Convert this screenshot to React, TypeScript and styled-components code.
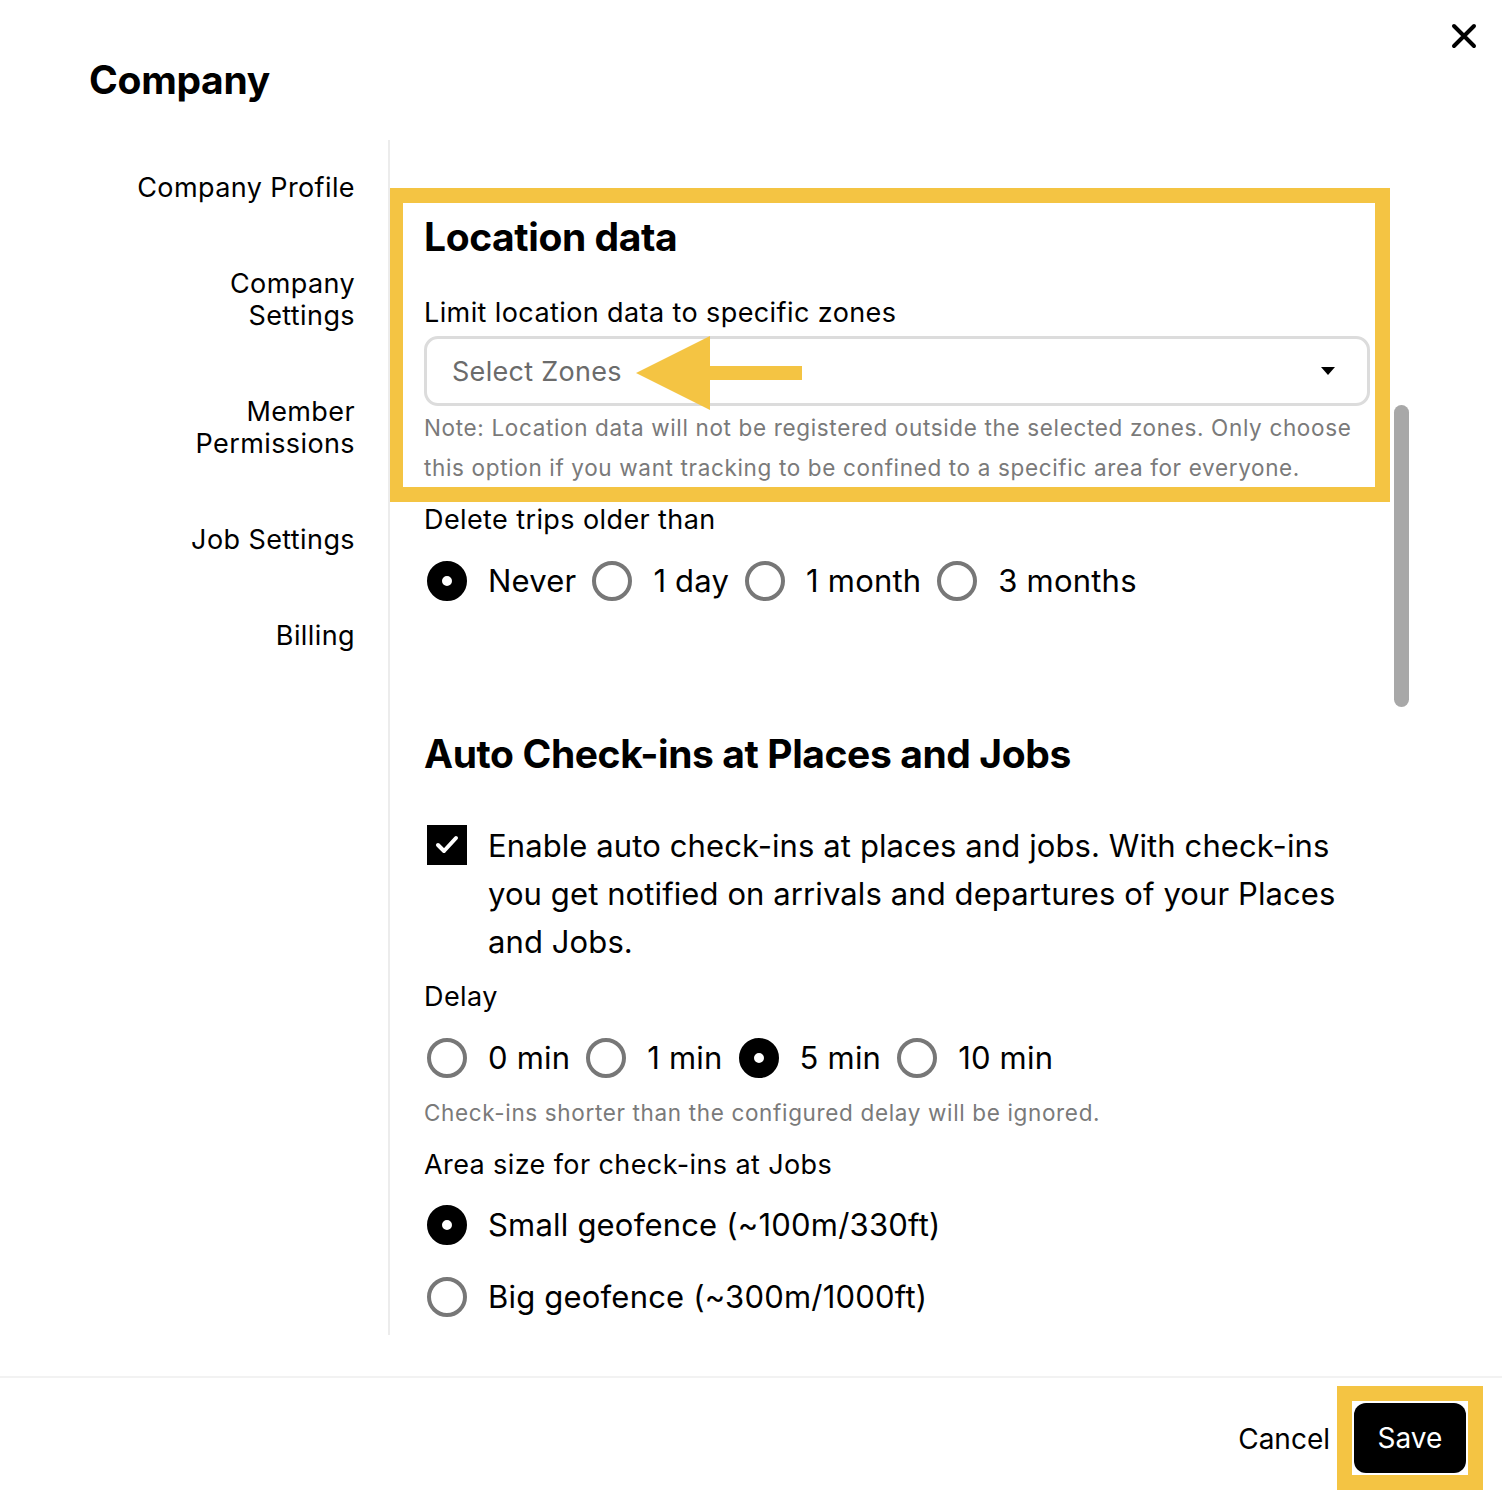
import styled, { createGlobalStyle } from 'styled-components';

const GlobalStyle = createGlobalStyle`
  html, body {
    margin: 0;
    padding: 0;
    background: #ffffff;
  }
  body {
    font-family: Inter, 'Noto Sans', 'Liberation Sans', sans-serif;
    color: #000000;
  }
`;

const YELLOW = '#f4c443';

const Page = styled.div`
  width: 1502px;
  height: 1490px;
  position: relative;
  overflow: hidden;
  display: flex;
  flex-direction: column;
`;

const Header = styled.div`
  height: 140px;
  padding-left: 89px;
  display: flex;
  align-items: flex-start;
`;

const Title = styled.h1`
  margin: 56px 0 0;
  font-size: 39px;
  font-weight: 700;
  letter-spacing: -0.3px;
  line-height: 48px;
`;

const CloseButton = styled.button`
  position: absolute;
  top: 22px;
  right: 24px;
  width: 28px;
  height: 28px;
  border: none;
  background: none;
  padding: 0;
  cursor: pointer;
`;

const Body = styled.div`
  display: flex;
  height: 1195px;
  position: relative;
`;

const Sidebar = styled.nav`
  width: 355px;
  padding-top: 32px;
  padding-right: 33px;
  display: flex;
  flex-direction: column;
  align-items: flex-end;
  gap: 64px;
  border-right: 2px solid #ececec;
`;

const NavItem = styled.a`
  font-size: 27px;
  line-height: 32px;
  text-align: right;
  color: #000;
  text-decoration: none;
  letter-spacing: 0.4px;
`;

const Content = styled.div`
  flex: 1;
  padding-left: 34px;
  padding-right: 132px;
  overflow: hidden;
`;

const ScrollThumb = styled.div`
  position: absolute;
  right: 93px;
  top: 265px;
  width: 15px;
  height: 302px;
  border-radius: 8px;
  background: #a8a8a8;
`;

const Section = styled.section`
  position: relative;
  padding-top: 73px;
`;

const HeadingTwo = styled.h2<{ $top: number }>`
  margin: ${(p) => p.$top}px 0 0;
  font-size: 39px;
  font-weight: 700;
  line-height: 48px;
  letter-spacing: -0.4px;
`;

const Label = styled.div<{ $top: number }>`
  margin-top: ${(p) => p.$top}px;
  font-size: 27px;
  line-height: 32px;
  letter-spacing: 0.4px;
`;

const SelectBox = styled.div`
  margin-top: 7px;
  height: 64px;
  border: 3px solid #dcdcdc;
  border-radius: 14px;
  display: flex;
  align-items: center;
  justify-content: space-between;
  padding: 0 32px 0 25px;
  font-size: 27px;
  color: #6b6b6b;
  letter-spacing: 0.3px;
`;

const Note = styled.p<{ $top: number; $lh: number }>`
  margin: ${(p) => p.$top}px 0 0;
  font-size: 22.5px;
  line-height: ${(p) => p.$lh}px;
  color: #7a7a7a;
  letter-spacing: 0.65px;
`;

const HighlightBox = styled.div`
  position: absolute;
  left: -36px;
  top: 48px;
  width: 1002px;
  height: 314px;
  box-sizing: border-box;
  border: 15px solid ${YELLOW};
  pointer-events: none;
`;

const ArrowMark = styled.svg`
  position: absolute;
  left: 212px;
  top: 196px;
  pointer-events: none;
`;

const RadioRow = styled.div<{ $top: number }>`
  margin-top: ${(p) => p.$top}px;
  padding-left: 3px;
  display: flex;
  align-items: center;
  gap: 16px;
`;

const RadioColumn = styled.div`
  margin-top: 24px;
  padding-left: 3px;
  display: flex;
  flex-direction: column;
  gap: 32px;
`;

const Option = styled.label`
  display: flex;
  align-items: center;
  gap: 21px;
  font-size: 31px;
  line-height: 40px;
  letter-spacing: 0.2px;
  cursor: pointer;
`;

const RadioDot = styled.span<{ $on: boolean }>`
  width: 40px;
  height: 40px;
  border-radius: 50%;
  box-sizing: border-box;
  flex-shrink: 0;
  border: ${(p) => (p.$on ? '15px solid #000' : '4px solid #777')};
  background: #fff;
`;

const CheckRow = styled.label`
  margin-top: 44px;
  display: flex;
  align-items: flex-start;
  gap: 21px;
`;

const CheckBox = styled.span`
  width: 40px;
  height: 40px;
  margin-left: 3px;
  margin-top: 3px;
  background: #000;
  flex-shrink: 0;
  display: flex;
  align-items: center;
  justify-content: center;
`;

const CheckText = styled.span`
  font-size: 31px;
  line-height: 48px;
  letter-spacing: 0.1px;
`;

const Footer = styled.footer`
  border-top: 2px solid #f2f2f2;
  margin-top: 41px;
  flex: 1;
  display: flex;
  justify-content: flex-end;
  align-items: flex-start;
  padding-right: 19px;
  gap: 7px;
`;

const CancelButton = styled.button`
  margin-top: 44px;
  border: none;
  background: none;
  font-family: inherit;
  font-size: 28px;
  color: #000;
  padding: 0;
  cursor: pointer;
`;

const SaveHighlight = styled.div`
  margin-top: 8px;
  border: 15px solid ${YELLOW};
  padding: 2px;
  background: #fff;
  display: flex;
`;

const SaveButton = styled.button`
  width: 112px;
  height: 70px;
  background: #000;
  color: #fff;
  border: none;
  border-radius: 12px;
  font-family: inherit;
  font-size: 28px;
  cursor: pointer;
`;

const Radio = ({ label, on }: { label: string; on?: boolean }) => (
  <Option>
    <RadioDot $on={!!on} />
    {label}
  </Option>
);

export default function App() {
  const navItems = [
    ['Company Profile'],
    ['Company', 'Settings'],
    ['Member', 'Permissions'],
    ['Job Settings'],
    ['Billing'],
  ];

  return (
    <Page>
      <GlobalStyle />
      <Header>
        <Title>Company</Title>
      </Header>
      <CloseButton aria-label="Close">
        <svg width="28" height="28" viewBox="0 0 28 28">
          <path d="M4 4 L24 24 M24 4 L4 24" stroke="#000" strokeWidth="4" strokeLinecap="round" />
        </svg>
      </CloseButton>

      <Body>
        <Sidebar>
          {navItems.map((lines) => (
            <NavItem key={lines.join(' ')}>
              {lines.map((l, i) => (
                <div key={i}>{l}</div>
              ))}
            </NavItem>
          ))}
        </Sidebar>

        <Content>
          <Section>
            <HeadingTwo $top={0}>Location data</HeadingTwo>
            <Label $top={36}>Limit location data to specific zones</Label>
            <SelectBox>
              <span>Select Zones</span>
              <svg width="14" height="8" viewBox="0 0 14 8">
                <path d="M0 0 L14 0 L7 8 Z" fill="#000" />
              </svg>
            </SelectBox>
            <Note $top={2} $lh={40}>
              Note: Location data will not be registered outside the selected zones. Only choose this option if you
              want tracking to be confined to a specific area for everyone.
            </Note>
            <HighlightBox />
            <ArrowMark width="168" height="74" viewBox="0 0 168 74">
              <path d="M0 37 L74 0 L74 30 L166 30 L166 44 L74 44 L74 74 Z" fill={YELLOW} />
            </ArrowMark>
          </Section>

          <Label $top={16}>Delete trips older than</Label>
          <RadioRow $top={25}>
            <Radio label="Never" on />
            <Radio label="1 day" />
            <Radio label="1 month" />
            <Radio label="3 months" />
          </RadioRow>

          <HeadingTwo $top={129}>Auto Check-ins at Places and Jobs</HeadingTwo>
          <CheckRow>
            <CheckBox>
              <svg width="24" height="20" viewBox="0 0 24 20">
                <path d="M3 10 L9 16 L21 3" stroke="#fff" strokeWidth="4" fill="none" strokeLinecap="round" strokeLinejoin="round" />
              </svg>
            </CheckBox>
            <CheckText>
              Enable auto check-ins at places and jobs. With check-ins you get notified on arrivals and departures of
              your Places and Jobs.
            </CheckText>
          </CheckRow>

          <Label $top={15}>Delay</Label>
          <RadioRow $top={25}>
            <Radio label="0 min" />
            <Radio label="1 min" />
            <Radio label="5 min" on />
            <Radio label="10 min" />
          </RadioRow>
          <Note $top={19} $lh={32}>
            Check-ins shorter than the configured delay will be ignored.
          </Note>

          <Label $top={20}>Area size for check-ins at Jobs</Label>
          <RadioColumn>
            <Radio label="Small geofence (~100m/330ft)" on />
            <Radio label="Big geofence (~300m/1000ft)" />
          </RadioColumn>
        </Content>

        <ScrollThumb />
      </Body>

      <Footer>
        <CancelButton>Cancel</CancelButton>
        <SaveHighlight>
          <SaveButton>Save</SaveButton>
        </SaveHighlight>
      </Footer>
    </Page>
  );
}
